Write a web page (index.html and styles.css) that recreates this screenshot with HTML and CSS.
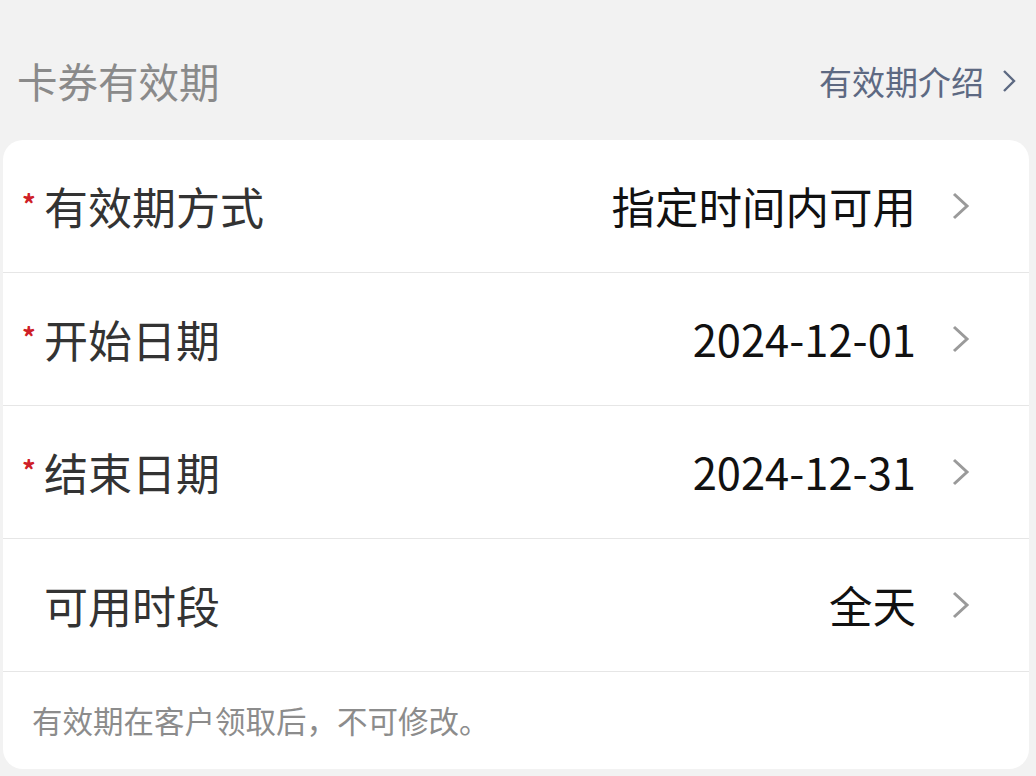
FILE: index.html
```html
<!DOCTYPE html>
<html lang="zh-CN">
<head>
<meta charset="utf-8">
<link rel="stylesheet" href="styles.css">
</head>
<body>
<div class="page">
  <div class="header">
    <div class="title">卡券有效期</div>
    <div class="intro">有效期介绍
      <svg class="intro-chev" viewBox="0 0 14 24" width="14" height="24"><path d="M2 2 L12 12 L2 22" fill="none" stroke="currentColor" stroke-width="2.4"/></svg>
    </div>
  </div>
  <div class="card">
    <div class="row">
      <span class="req">*</span><span class="label">有效期方式</span>
      <span class="value">指定时间内可用</span>
      <svg class="chev" viewBox="0 0 20 30" width="20" height="30"><path d="M3 3 L16 15 L3 27" fill="none" stroke="currentColor" stroke-width="3"/></svg>
    </div>
    <div class="row">
      <span class="req">*</span><span class="label">开始日期</span>
      <span class="value">2024-12-01</span>
      <svg class="chev" viewBox="0 0 20 30" width="20" height="30"><path d="M3 3 L16 15 L3 27" fill="none" stroke="currentColor" stroke-width="3"/></svg>
    </div>
    <div class="row">
      <span class="req">*</span><span class="label">结束日期</span>
      <span class="value">2024-12-31</span>
      <svg class="chev" viewBox="0 0 20 30" width="20" height="30"><path d="M3 3 L16 15 L3 27" fill="none" stroke="currentColor" stroke-width="3"/></svg>
    </div>
    <div class="row">
      <span class="req"></span><span class="label">可用时段</span>
      <span class="value">全天</span>
      <svg class="chev" viewBox="0 0 20 30" width="20" height="30"><path d="M3 3 L16 15 L3 27" fill="none" stroke="currentColor" stroke-width="3"/></svg>
    </div>
    <div class="note">有效期在客户领取后，不可修改。</div>
  </div>
</div>
</body>
</html>
```
FILE: styles.css
```css
html, body {
  margin: 0;
  padding: 0;
  background: #f2f2f2;
  font-family: "Noto Sans CJK SC", "Noto Sans", sans-serif;
}
.page {
  width: 1036px;
  height: 776px;
  overflow: hidden;
}
.header {
  height: 140px;
  box-sizing: border-box;
  padding: 22px 20px 0 17px;
  display: flex;
  align-items: center;
  justify-content: space-between;
}
.title {
  font-size: 40.5px;
  color: #8a8a8a;
  line-height: 1;
}
.intro {
  font-size: 33px;
  color: #5d6982;
  display: flex;
  align-items: center;
  gap: 18px;
  line-height: 1;
}
.intro-chev {
  display: block;
}
.card {
  margin: 0 7px 0 3px;
  background: #ffffff;
  border-radius: 20px;
  height: 629px;
}
.row {
  height: 132px;
  border-bottom: 1px solid #e6e6e6;
  display: flex;
  align-items: center;
  padding: 0 58px 0 19px;
}
.req {
  width: 22px;
  color: #cf1f28;
  font-size: 27px;
  font-weight: bold;
  line-height: 1;
  margin-top: -6px;
}
.label {
  font-size: 44px;
  color: #333333;
  line-height: 1;
}
.value {
  margin-left: auto;
  font-size: 43.5px;
  color: #111111;
  line-height: 1;
}
.chev {
  display: block;
  color: #9a9a9a;
  margin-left: 35px;
}
.note {
  height: 96px;
  display: flex;
  align-items: center;
  padding-left: 29px;
  font-size: 30.5px;
  color: #8c8c8c;
  line-height: 1;
}
```
